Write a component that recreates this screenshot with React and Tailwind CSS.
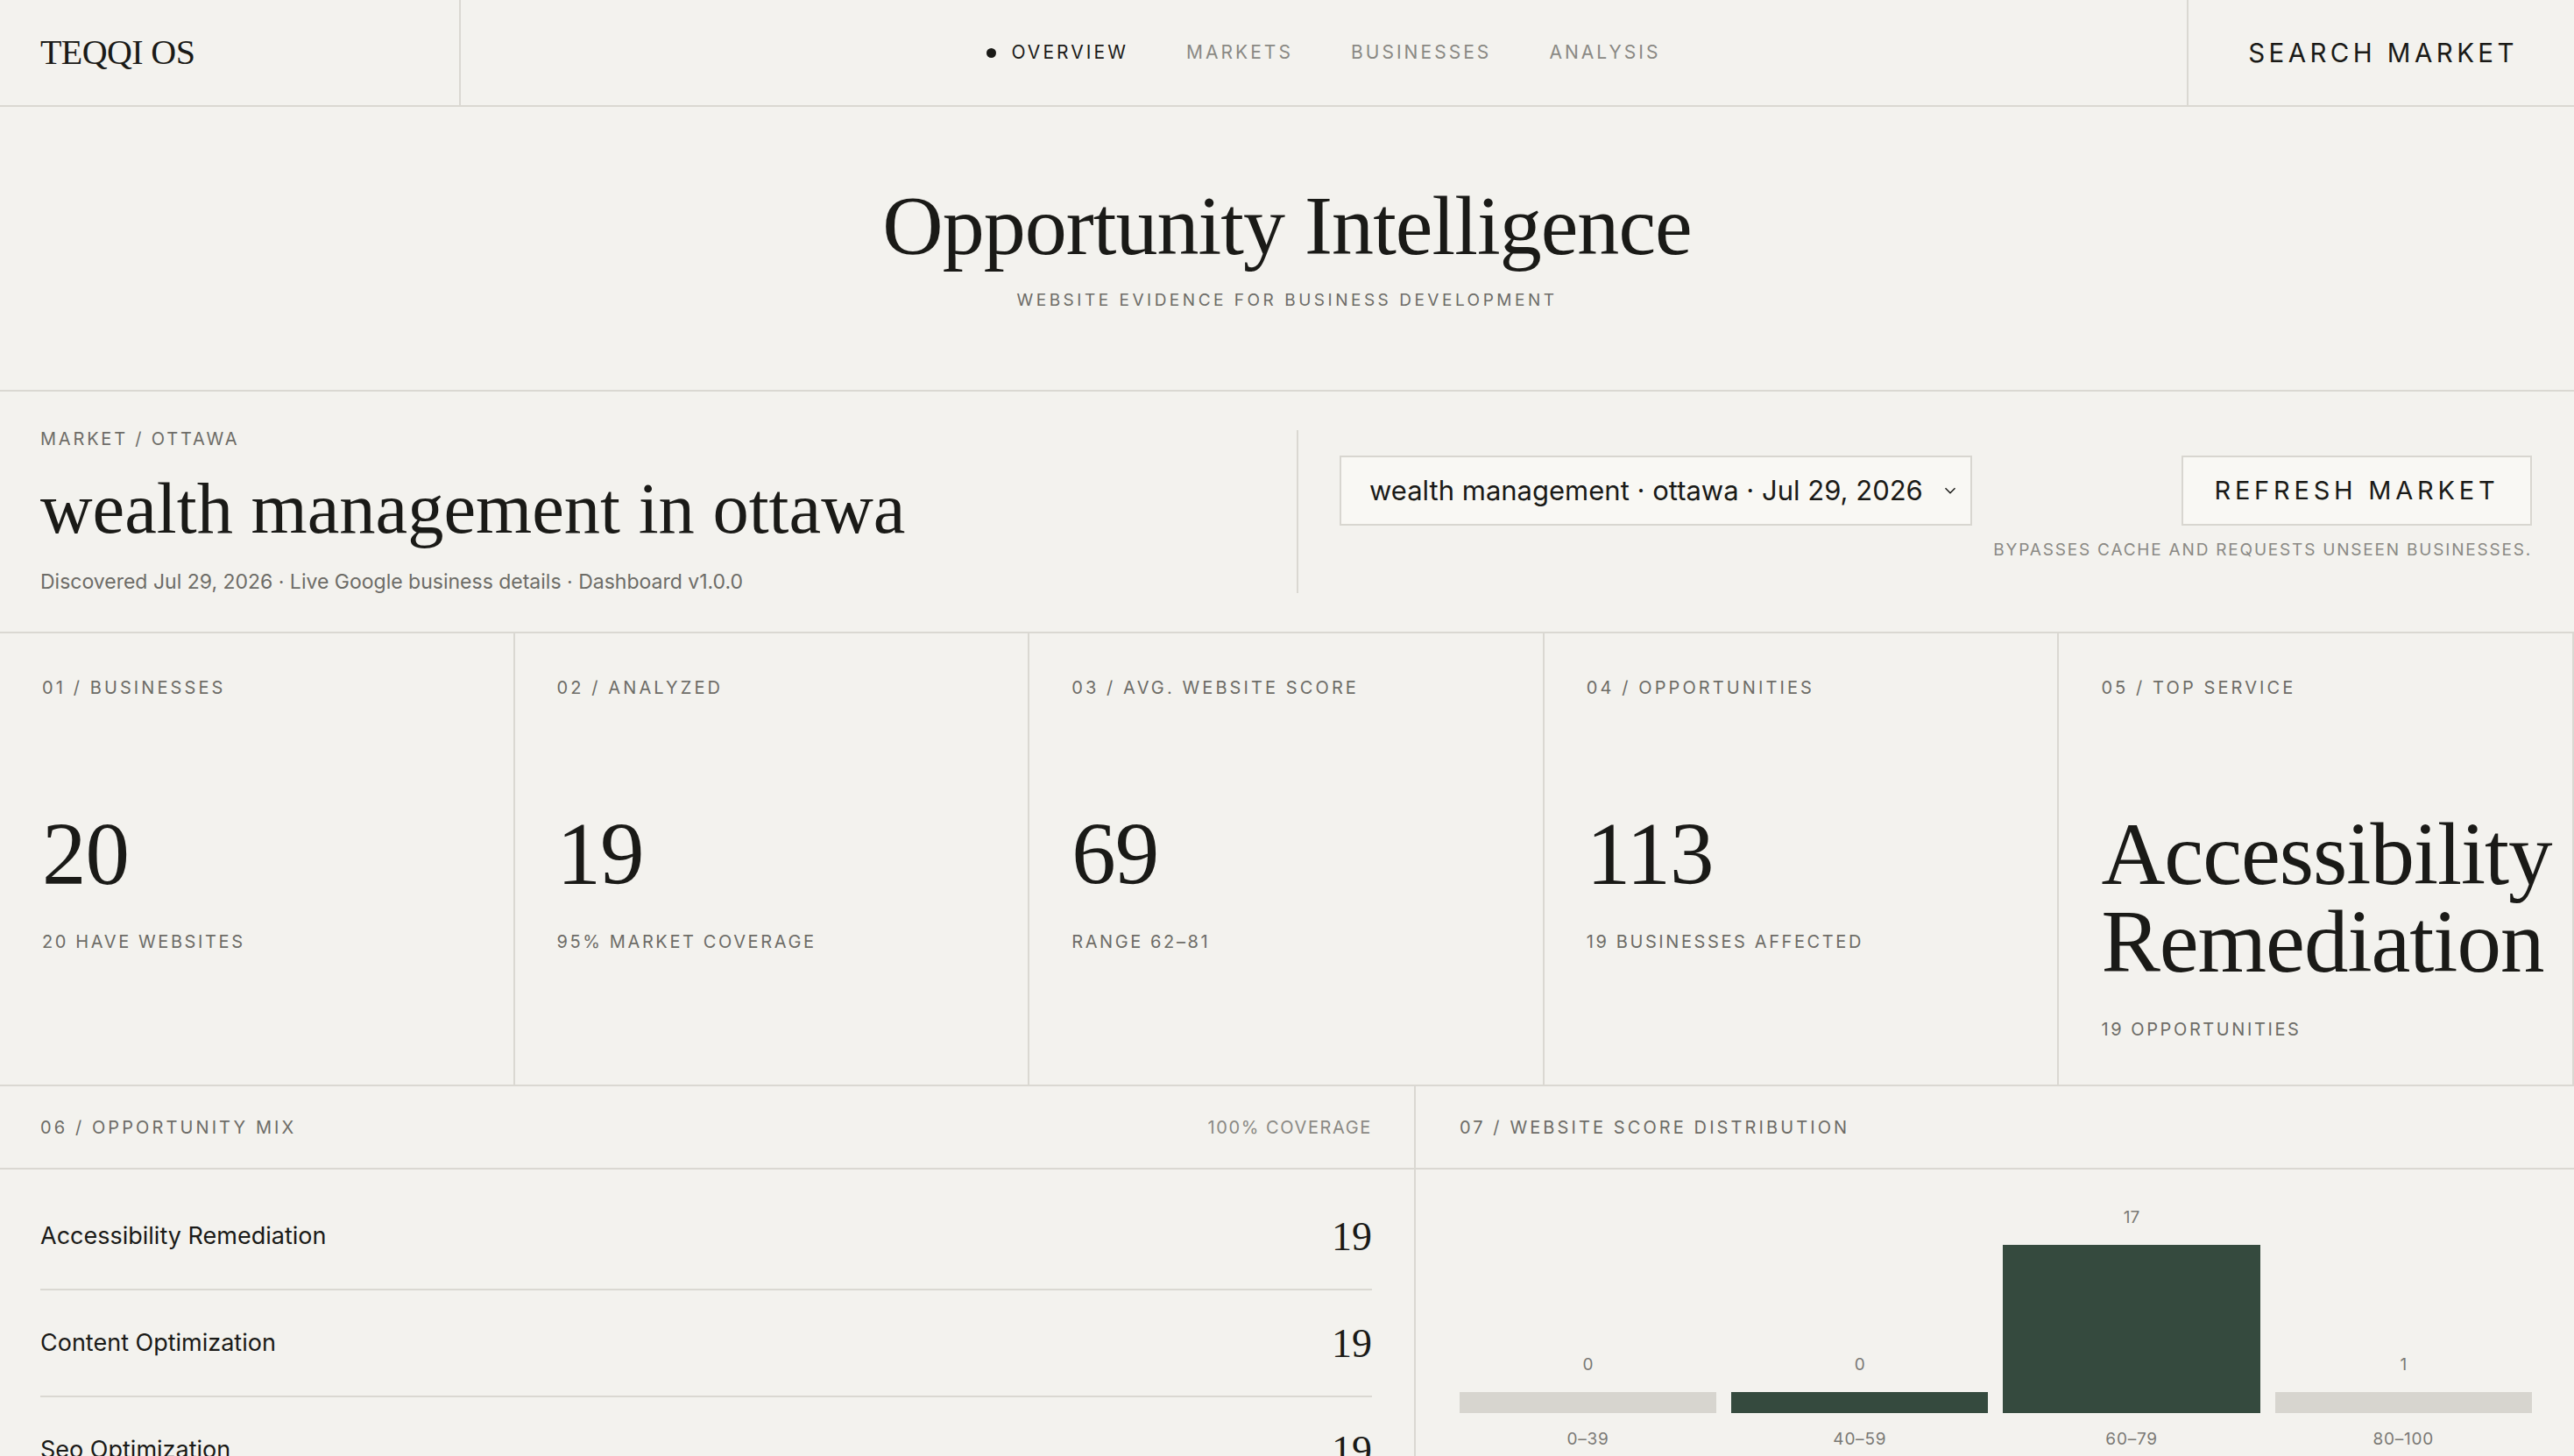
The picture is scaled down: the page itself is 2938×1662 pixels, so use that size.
import React from "react";

const serif = "font-['Liberation_Serif','Times_New_Roman',serif]";
const sans = "font-['Inter','Liberation_Sans',sans-serif]";

const navItems = ["Overview", "Markets", "Businesses", "Analysis"];

const stats = [
  { label: "01 / Businesses", value: "20", sub: "20 have websites" },
  { label: "02 / Analyzed", value: "19", sub: "95% market coverage" },
  { label: "03 / Avg. website score", value: "69", sub: "Range 62–81" },
  { label: "04 / Opportunities", value: "113", sub: "19 businesses affected" },
  { label: "05 / Top service", value: "Accessibility Remediation", sub: "19 opportunities" },
];

const mix = [
  { name: "Accessibility Remediation", count: 19 },
  { name: "Content Optimization", count: 19 },
  { name: "Seo Optimization", count: 19 },
  { name: "Performance Optimization", count: 19 },
];

const buckets = [
  { range: "0–39", count: 0, dark: false },
  { range: "40–59", count: 0, dark: true },
  { range: "60–79", count: 17, dark: true },
  { range: "80–100", count: 1, dark: false },
];

// tracking + colour passed in so they don't fight with defaults
const Label = ({ children, className = "", tracking = "tracking-[0.155em]", color = "text-[#6d6c67]" }) => (
  <div className={`${sans} text-[20px] leading-[20px] uppercase ${tracking} ${color} ${className}`}>
    {children}
  </div>
);

const App = () => {
  const max = Math.max(...buckets.map((b) => b.count));

  return (
    <div className={`min-h-screen bg-[#f3f2ee] text-[#1a1a17] ${sans}`}>
      {/* top bar */}
      <header className="flex h-[122px] border-b-2 border-[#dad8d2]">
        <div className="w-[526px] flex items-center pl-[46px] border-r-2 border-[#dad8d2]">
          <span className={`${serif} text-[40px] tracking-[-0.015em] leading-none`}>TEQQI OS</span>
        </div>
        <nav className="flex-1 flex items-center justify-center gap-[66px]">
          {navItems.map((item, i) => (
            <div key={item} className="flex items-center gap-[17px]">
              {i === 0 && <span className="w-[11px] h-[11px] rounded-full bg-[#1a1a17]" />}
              <span
                className={`text-[21px] uppercase tracking-[0.145em] ${
                  i === 0 ? "text-[#1a1a17]" : "text-[#8a8984]"
                }`}
              >
                {item}
              </span>
            </div>
          ))}
        </nav>
        <div className="w-[442px] flex items-center justify-end pr-[64px] border-l-2 border-[#dad8d2]">
          <span className="text-[29.5px] uppercase tracking-[0.15em]">Search market</span>
        </div>
      </header>

      {/* hero */}
      <section className="flex flex-col items-center pt-[86px] pb-[92px] border-b-2 border-[#dad8d2]">
        <h1 className={`${serif} text-[96px] leading-[100px] tracking-[-0.01em]`}>Opportunity Intelligence</h1>
        <p className="mt-[25px] text-[19px] leading-[20px] uppercase tracking-[0.185em] text-[#6d6c67]">
          Website evidence for business development
        </p>
      </section>

      {/* market */}
      <section className="flex items-center pl-[46px] pr-[48px] py-[44px] border-b-2 border-[#dad8d2]">
        <div className="w-[1436px] border-r-2 border-[#dad8d2]">
          <Label tracking="tracking-[0.14em]">Market / Ottawa</Label>
          <h2 className={`${serif} mt-[28px] text-[82.5px] leading-[82px]`}>wealth management in ottawa</h2>
          <p className="mt-[30px] text-[23px] leading-[26px] text-[#6d6c67]">
            Discovered Jul 29, 2026 · Live Google business details · Dashboard v1.0.0
          </p>
        </div>
        <div className="flex-1 pl-[47px] pb-[10px]">
          <div className="flex items-center justify-between">
            <div className="w-[722px] h-[80px] flex items-center justify-between pl-[32px] pr-[12px] bg-[#f9f8f4] border-2 border-[#d8d6d0]">
              <span className="text-[31px] text-[#1a1a17]">wealth management · ottawa · Jul 29, 2026</span>
              <svg width="22" height="22" viewBox="0 0 24 24" fill="none" stroke="#1a1a17" strokeWidth="1.6">
                <path d="M6 9l6 6 6-6" />
              </svg>
            </div>
            <div className="w-[400px] h-[80px] flex items-center justify-center bg-[#f9f8f4] border-2 border-[#d8d6d0]">
              <span className="text-[29px] uppercase tracking-[0.165em]">Refresh market</span>
            </div>
          </div>
          <p className="mt-[18px] text-right text-[19px] leading-[20px] uppercase tracking-[0.095em] text-[#8a8984]">
            Bypasses cache and requests unseen businesses.
          </p>
        </div>
      </section>

      {/* stats */}
      <section className="grid grid-cols-5 border-b-2 border-[#dad8d2]">
        {stats.map((s) => (
          <div key={s.label} className="border-r-2 border-[#dad8d2] pl-[48px] pr-[40px] pt-[52px] pb-[53px]">
            <Label>{s.label}</Label>
            <div className={`${serif} mt-[130px] text-[101px] leading-[100px] tracking-[-0.01em]`}>{s.value}</div>
            <Label className="mt-[40px]" tracking="tracking-[0.13em]">
              {s.sub}
            </Label>
          </div>
        ))}
      </section>

      {/* mix + distribution */}
      <section className="grid grid-cols-[11fr_9fr]">
        <div className="border-r-2 border-[#dad8d2]">
          <div className="flex items-center justify-between h-[95px] pl-[46px] pr-[48px] border-b-2 border-[#dad8d2]">
            <Label>06 / Opportunity mix</Label>
            <Label tracking="tracking-[0.08em]" color="text-[#8a8984]">
              100% coverage
            </Label>
          </div>
          <div className="pt-[16px] pl-[46px] pr-[48px]">
            {mix.map((m) => (
              <div key={m.name} className="flex items-center justify-between h-[122px] border-b-2 border-[#dad8d2]">
                <span className="text-[27px]">{m.name}</span>
                <span className={`${serif} text-[46px]`}>{m.count}</span>
              </div>
            ))}
          </div>
        </div>
        <div>
          <div className="flex items-center h-[95px] pl-[50px] border-b-2 border-[#dad8d2]">
            <Label>07 / Website score distribution</Label>
          </div>
          <div className="grid grid-cols-4 gap-[17px] items-end pt-[45px] pl-[50px] pr-[48px]">
            {buckets.map((b) => (
              <div key={b.range} className="flex flex-col items-stretch">
                <span className="text-center text-[19px] leading-[20px] text-[#7a7975]">{b.count}</span>
                <div
                  className={`mt-[21px] ${b.dark ? "bg-[#354a3e]" : "bg-[#d7d5cf]"}`}
                  style={{ height: Math.max(24, (b.count / max) * 192) }}
                />
                <span className="mt-[20px] text-center text-[19px] leading-[20px] tracking-[0.04em] text-[#7a7975]">
                  {b.range}
                </span>
              </div>
            ))}
          </div>
        </div>
      </section>
    </div>
  );
};

export default App;
